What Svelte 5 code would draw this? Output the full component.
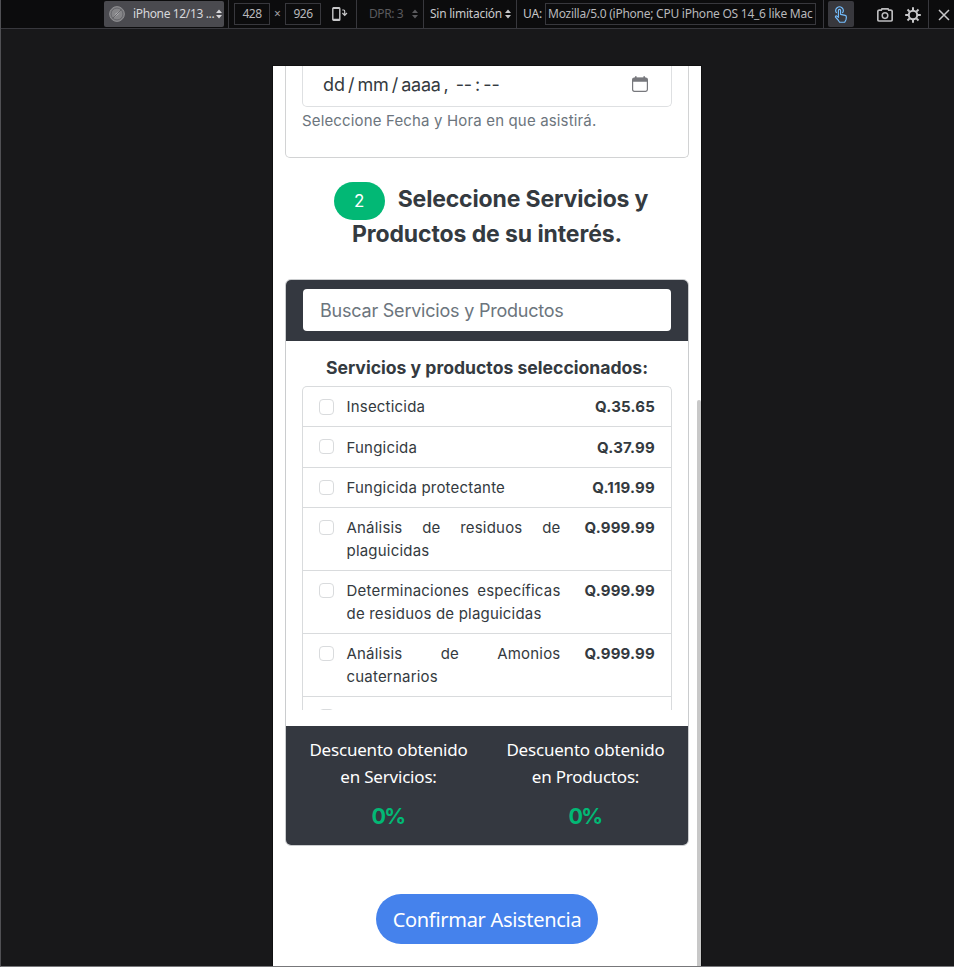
<script>
  const items = [
    { lines: ['Insecticida'], price: 'Q.35.65', height: 40, top: 8, check: 4 },
    { lines: ['Fungicida'], price: 'Q.37.99', height: 41, top: 9, check: 3 },
    { lines: ['Fungicida protectante'], price: 'Q.119.99', height: 40, top: 8, check: 4 },
    { lines: ['Análisis de residuos de', 'plaguicidas'], price: 'Q.999.99', height: 63, top: 8, check: 4 },
    { lines: ['Determinaciones específicas', 'de residuos de plaguicidas'], price: 'Q.999.99', height: 63, top: 8, check: 4 },
    { lines: ['Análisis de Amonios', 'cuaternarios'], price: 'Q.999.99', height: 63, top: 8, check: 4 },
    { lines: [], price: '', height: 40, top: 8, check: 4 }
  ];
  const discounts = ['Servicios', 'Productos'];
</script>

{#snippet arrows()}
  <svg class="arrows" width="6" height="10" viewBox="0 0 6 10"><path d="M0 4 3 0.6 6 4zM0 6 3 9.4 6 6z" fill="currentColor" /></svg>
{/snippet}

<div class="window">
  <header class="toolbar">
    <div class="cell device-cell">
      <button class="device">
        <svg width="16" height="16" viewBox="0 0 16 16"><circle cx="8" cy="8" r="7.4" fill="#7d7d80" stroke="#8c8c8f" /><circle cx="8" cy="8" r="5.9" fill="#858588" stroke="#606064" stroke-width=".8" /><path d="M12 4 8.8 8.8 4 12 7.2 7.2z" fill="#b4b4b6" /><path d="M12.4 3.6 3.6 12.4" stroke="#56565b" stroke-width=".8" /></svg>
        <span class="t-device">iPhone 12/13 ...</span>
        {@render arrows()}
      </button>
    </div>
    <div class="cell size-cell">
      <span class="field size">428</span>
      <span class="times">×</span>
      <span class="field size">926</span>
      <svg class="rotate" width="16" height="14" viewBox="0 0 16 14"><rect x=".8" y=".8" width="7" height="12.4" rx=".8" fill="none" stroke="#c8c8ca" stroke-width="1.4" /><path d="M1 1.2h6.6M1 12.5h6.6" stroke="#c8c8ca" stroke-width="1.6" /><path d="M10.2 3h1.5q1 0 1 1.2V8M10.4 6l2.3 2.4L15 6" fill="none" stroke="#c8c8ca" stroke-width="1.2" /></svg>
    </div>
    <div class="cell dpr"><span class="t-dpr">DPR: 3</span>{@render arrows()}</div>
    <div class="cell throttle"><span class="t-throttle">Sin limitación</span>{@render arrows()}</div>
    <div class="cell ua">
      <span class="t-ua">UA:</span>
      <span class="field agent"><span class="t-agent">Mozilla/5.0 (iPhone; CPU iPhone OS 14_6 like Mac</span></span>
    </div>
    <div class="cell tools">
      <button class="touch">
        <svg width="14" height="17" viewBox="0 0 14 17" fill="none" stroke="#75bfff" stroke-width="1.15" stroke-linejoin="round" stroke-linecap="round"><path d="M4.4 10.5V4.4a1.1 1.1 0 0 1 2.2 0v4l4.6 1q1.3.4 1.2 1.7l-.4 2.6-1.3 2.5H5.6L4.1 14 1.5 11.2q-.4-1.2.9-1.3l2 1.4" /><path d="M2.4 6.6a3.7 3.7 0 1 1 6.2 0" /></svg>
      </button>
      <svg class="camera" width="16" height="14" viewBox="0 0 16 14" fill="none" stroke="#bcbcbe" stroke-width="1.7"><path d="M2.3 2.2h2L5 .9h6l.7 1.3h2q1.5 0 1.5 1.5v7.8q0 1.5-1.5 1.5H2.3Q.8 13 .8 11.5V3.7q0-1.5 1.5-1.5z" /><circle cx="8" cy="7.6" r="2.8" stroke-width="1.5" /></svg>
      <svg class="gear" width="16" height="16" viewBox="0 0 16 16" fill="none" stroke="#c8c8ca"><circle cx="8" cy="8" r="4.2" stroke-width="2" /><path d="M8 .2v3M8 12.8v3M.2 8h3M12.8 8h3M2.5 2.5l2.1 2.1M11.4 11.4l2.1 2.1M13.5 2.5l-2.1 2.1M4.6 11.4l-2.1 2.1" stroke-width="2" /></svg>
    </div>
    <div class="cell close">
      <svg width="12" height="12" viewBox="0 0 12 12"><path d="M1 1l10 10M11 1 1 11" stroke="#c8c8ca" stroke-width="1.5" /></svg>
    </div>
  </header>

  <main class="stage">
    <div class="phone">
      <section class="date-card">
        <div class="date-input">
          <span class="t-date"><span>dd</span><span>/</span><span>mm</span><span>/</span><span class="year">aaaa</span><span>,</span><span class="time">--</span><span>:</span><span>--</span></span>
          <svg width="16" height="16" viewBox="0 0 16 16"><path d="M2.3 2h11.4Q15.4 2 15.4 3.7v9.9q0 1.7-1.7 1.7H2.3q-1.7 0-1.7-1.7V3.7Q.6 2 2.3 2z" fill="none" stroke="#77787d" stroke-width="1.2" /><path d="M.6 3.4Q.8 1.8 2.3 1.8h11.4q1.5 0 1.7 1.6v2.4H.6zM3 .2h1.6v2H3zM11.4.2H13v2h-1.6z" fill="#77787d" /></svg>
        </div>
        <p class="hint"><span class="t-hint">Seleccione Fecha y Hora en que asistirá.</span></p>
      </section>

      <h2>
        <span class="first"><span class="badge">2</span><span class="t-h1">Seleccione Servicios y</span></span>
        <span class="t-h2">Productos de su interés.</span>
      </h2>

      <section class="card">
        <div class="card-header"><div class="search"><span class="t-search">Buscar Servicios y Productos</span></div></div>
        <div class="card-body">
          <h3><span class="t-title">Servicios y productos seleccionados:</span></h3>
          <ul>
            {#each items as item}
              <li style="height: {item.height}px; padding-top: {item.top}px">
                <span class="check" style="margin-top: {item.check}px"></span>
                <span class="name">
                  {#each item.lines as line, i}
                    <span class="line" class:spread={i < item.lines.length - 1}>{line}</span>
                  {/each}
                </span>
                <strong>{item.price}</strong>
              </li>
            {/each}
          </ul>
        </div>
        <footer>
          {#each discounts as kind}
            <div class="discount">
              <span class="t-disc">Descuento obtenido</span>
              <span class="t-disc">en {kind}:</span>
              <b>0%</b>
            </div>
          {/each}
        </footer>
      </section>

      <button class="confirm"><span class="t-confirm">Confirmar Asistencia</span></button>
      <div class="scrollbar"></div>
    </div>
  </main>
</div>

<style>
  :global(body) { margin: 0; background: #18181a; }
  * { box-sizing: border-box; }
  span, strong, b { white-space: nowrap; }
  button { border: 0; padding: 0; font: inherit; color: inherit; }
  svg { display: block; flex: none; }
  .window { width: 954px; height: 967px; overflow: hidden; display: flex; flex-direction: column; background: #18181a; border-bottom: 1px solid #77777a; border-left: 1px solid #505054; }
  .toolbar { height: 29px; flex: none; display: flex; background: #0c0c0d; border-bottom: 1px solid #38383d; color: #c8c8ca; font: 12px/14px "Noto Sans", sans-serif; padding-left: 103px; }
  .cell { display: flex; align-items: center; height: 28px; flex: none; border-right: 1px solid #38383d; }
  .device-cell { width: 125px; }
  .device { width: 120px; height: 26px; border-radius: 2px; background: #4a4a4f; display: flex; align-items: center; padding: 0 2px 0 5px; color: #d7d7db; }
  .t-device { flex: 1; text-align: left; margin-left: 8px; letter-spacing: -.36px; }
  .size-cell { width: 128px; padding-left: 5px; }
  .field { height: 22px; border: 1px solid #38383d; display: flex; align-items: center; color: #b8b8bb; }
  .size { width: 36px; justify-content: center; letter-spacing: -.5px; }
  .times { width: 15px; text-align: center; color: #a0a0a3; font-size: 12px; }
  .rotate { margin-left: 11px; }
  .dpr { width: 67px; padding: 0 5px 0 12px; justify-content: space-between; color: #5a5a5d; }
  .t-dpr { letter-spacing: -.4px; }
  .throttle { width: 93px; padding: 0 5px 0 6px; justify-content: space-between; }
  .t-throttle { letter-spacing: -.24px; }
  .ua { width: 307px; padding-left: 6px; }
  .t-ua { width: 22px; letter-spacing: -.2px; }
  .agent { width: 271px; padding-left: 2px; }
  .t-agent { letter-spacing: -.25px; }
  .tools { width: 105px; padding-left: 4px; }
  .touch { width: 26px; height: 26px; border-radius: 2px; background: #38383d; display: flex; align-items: center; justify-content: center; }
  .camera { margin-left: 23px; margin-top: 2px; }
  .gear { margin-left: 12px; margin-top: 2px; }
  .close { padding: 2px 0 0 9px; border: 0; }
  .stage { flex: 1; padding: 37px 0 0 272px; }
  .phone { position: relative; width: 428px; height: 900px; background: #fff; color: #343a40; font-family: Inter, sans-serif; padding: 0 12px; overflow: hidden; box-shadow: 0 0 0 1px #101011; }
  .date-card { height: 92px; border: 1px solid #d2d3d4; border-top: 0; border-radius: 0 0 5px 5px; padding: 0 16px; }
  .date-input { height: 41px; border: 1px solid #dee0e2; border-top: 0; border-radius: 0 0 5px 5px; display: flex; align-items: center; justify-content: space-between; padding: 0 23px 4px 20px; font-size: 18px; }
  .t-date { display: flex; gap: 3px; letter-spacing: -.05px; }
  .year { letter-spacing: -.3px; }
  .time { margin-left: 4px; }
  .hint { margin: 3px 0 0; font-size: 15px; line-height: 22px; color: #6c757d; }
  .t-hint { letter-spacing: .155px; }
  h2 { margin: 24px 0 0; font-size: 23px; line-height: 35px; font-weight: 700; display: flex; flex-direction: column; align-items: center; height: 98px; letter-spacing: -.16px; }
  .first { display: flex; height: 35px; margin-left: 8px; }
  .badge { width: 51px; height: 38px; border-radius: 19px; background: #02b875; color: #fff; font-size: 17px; font-weight: 400; line-height: 38px; text-align: center; margin-right: 13px; }
  .t-h2 { letter-spacing: -.1px; }
  .card { height: 567px; border: 1px solid #caccce; border-radius: 6px; overflow: hidden; display: flex; flex-direction: column; margin-top: -1px; }
  .card-header { height: 61px; background: #343840; padding: 9px 17px; flex: none; }
  .search { height: 42px; border-radius: 4px; background: #fff; padding-left: 17px; display: flex; align-items: center; color: #6c757d; font-size: 18px; letter-spacing: -.22px; }
  .card-body { height: 385px; flex: none; padding: 15px 16px 0; }
  h3 { margin: 0; height: 30px; font-size: 17.6px; line-height: 24px; text-align: center; font-weight: 700; }
  ul { list-style: none; margin: 0; padding: 0; height: 324px; overflow: hidden; border: 1px solid #d9dbdd; border-bottom: 0; border-radius: 5px 5px 0 0; }
  li { display: flex; align-items: flex-start; border-bottom: 1px solid #d9dbdd; padding: 0 16px; font-size: 15px; line-height: 23px; }
  .check { width: 15px; height: 15px; border: 1px solid #d9dbdd; border-radius: 4px; flex: none; }
  li:first-child .check { height: 16px; }
  .name { width: 214px; margin-left: 12.5px; letter-spacing: .2px; }
  .line { display: block; white-space: normal; }
  .spread { text-align-last: justify; }
  strong { margin-left: auto; font-weight: 700; letter-spacing: .2px; }
  footer { flex: 1; background: #343840; display: flex; justify-content: center; padding-top: 10px; }
  .discount { width: 197px; display: flex; flex-direction: column; align-items: center; color: #fff; font: 17px/27px "Noto Sans", sans-serif; letter-spacing: -.2px; }
  .discount b { font: 700 21.5px/27px Inter, sans-serif; color: #02b875; margin-top: 13px; letter-spacing: -1.6px; padding-right: 1px; }
  .confirm { width: 222px; height: 50px; border-radius: 25px; background: #4582ec; color: #fff; font: 20px/50px "Noto Sans", sans-serif; display: block; margin: 48px auto 0; letter-spacing: -.3px; }
  .t-confirm { display: block; height: 50px; line-height: 51px; }
  .scrollbar { position: absolute; right: 0; top: 334px; width: 4px; height: 570px; background: #c8c8c8; border-radius: 2px 2px 0 0; }
</style>
